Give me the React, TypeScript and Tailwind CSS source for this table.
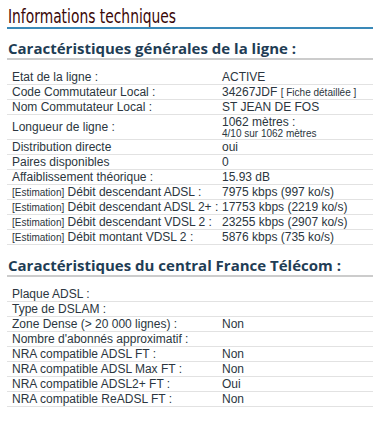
const general: { label: React.ReactNode; value: React.ReactNode; tall?: boolean }[] = [
  { label: "Etat de la ligne :", value: "ACTIVE" },
  {
    label: "Code Commutateur Local :",
    value: (
      <>
        34267JDF <span className="text-[10px]">[ Fiche détaillée ]</span>
      </>
    ),
  },
  { label: "Nom Commutateur Local :", value: "ST JEAN DE FOS" },
  {
    label: "Longueur de ligne :",
    value: (
      <div className="leading-[11px]">
        <div className="text-[12px] leading-[12px]">1062 mètres :</div>
        <div className="text-[10px]">4/10 sur 1062 mètres</div>
      </div>
    ),
    tall: true,
  },
  { label: "Distribution directe", value: "oui" },
  { label: "Paires disponibles", value: "0" },
  { label: "Affaiblissement théorique :", value: "15.93 dB" },
  { label: <Est text="Débit descendant ADSL :" />, value: "7975 kbps (997 ko/s)" },
  { label: <Est text="Débit descendant ADSL 2+ :" />, value: "17753 kbps (2219 ko/s)" },
  { label: <Est text="Débit descendant VDSL 2 :" />, value: "23255 kbps (2907 ko/s)" },
  { label: <Est text="Débit montant VDSL 2 :" />, value: "5876 kbps (735 ko/s)" },
]

const central: { label: string; value: string }[] = [
  { label: "Plaque ADSL :", value: "" },
  { label: "Type de DSLAM :", value: "" },
  { label: "Zone Dense (> 20 000 lignes) :", value: "Non" },
  { label: "Nombre d'abonnés approximatif :", value: "" },
  { label: "NRA compatible ADSL FT :", value: "Non" },
  { label: "NRA compatible ADSL Max FT :", value: "Non" },
  { label: "NRA compatible ADSL2+ FT :", value: "Oui" },
  { label: "NRA compatible ReADSL FT :", value: "Non" },
]

function Est({ text }: { text: string }) {
  return (
    <>
      <span className="text-[10px]">[Estimation]</span> {text}
    </>
  )
}

function Row({ label, value, tall }: { label: React.ReactNode; value: React.ReactNode; tall?: boolean }) {
  return (
    <div
      className={`flex items-center border-b border-[#e2e2e2] ${tall ? "h-[25px]" : "h-[15px]"}`}
    >
      <div className="w-[215px] shrink-0 pl-[5px] whitespace-nowrap">{label}</div>
      <div className="whitespace-nowrap">{value}</div>
    </div>
  )
}

function SectionTitle({ children }: { children: React.ReactNode }) {
  return (
    <h2
      className="border-b-2 border-[#cccccc] pl-[1px] text-[15px] leading-[20px] font-bold whitespace-nowrap text-[#1f3d55]"
      style={{ fontFamily: '"Open Sans", "DejaVu Sans", sans-serif' }}
    >
      {children}
    </h2>
  )
}

export default function App() {
  return (
    <div className="min-h-[423px] bg-white pl-[7px] pr-[1px] pt-[6px]">
      <h1
        className="border-b-2 border-[#3a89b8] pl-[1px] text-[20px] leading-[21px] whitespace-nowrap text-[#3a0808]"
        style={{ fontFamily: '"DejaVu Sans Condensed", "DejaVu Sans", sans-serif' }}
      >
        <span className="inline-block origin-left scale-x-[0.77]">Informations techniques</span>
      </h1>

      <div className="mt-[9px]">
        <SectionTitle>Caractéristiques générales de la ligne :</SectionTitle>
      </div>
      <div
        className="mt-[10px] text-[12px] leading-[14px] text-[#2b3640]"
        style={{ fontFamily: '"Liberation Sans", Arial, sans-serif' }}
      >
        {general.map((r, i) => (
          <Row key={i} label={r.label} value={r.value} tall={r.tall} />
        ))}
      </div>

      <div className="mt-[10px]">
        <SectionTitle>Caractéristiques du central France Télécom :</SectionTitle>
      </div>
      <div
        className="mt-[10px] text-[12px] leading-[14px] text-[#2b3640]"
        style={{ fontFamily: '"Liberation Sans", Arial, sans-serif' }}
      >
        {central.map((r, i) => (
          <Row key={i} label={r.label} value={r.value} />
        ))}
      </div>
    </div>
  )
}
